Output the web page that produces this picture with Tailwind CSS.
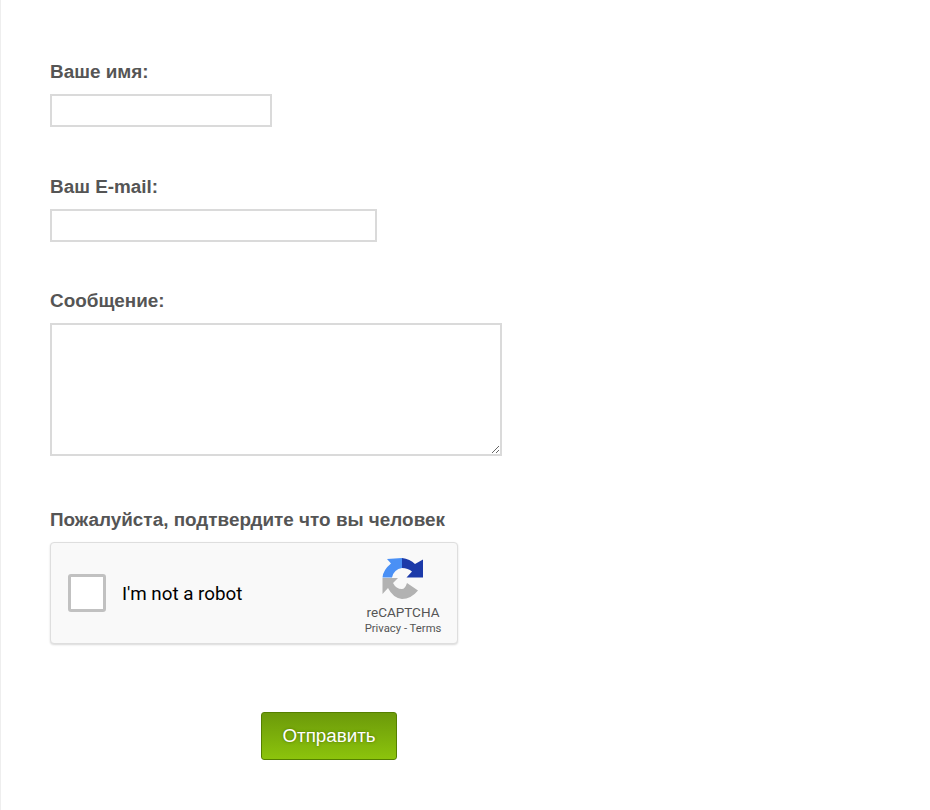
<!DOCTYPE html>
<html lang="ru">
<head>
  <meta charset="UTF-8">
  <title>Форма</title>
  <script src="https://cdn.jsdelivr.net/npm/@tailwindcss/browser@4"></script>
</head>
<body class="bg-white h-[810px] overflow-hidden font-['Liberation_Sans',sans-serif]">
  <form class="h-full border-l border-[#eeeeee] pl-[49px] pt-[60px] flex flex-col items-start">
    <label class="block h-[34px] leading-[24px] text-[18.9px] font-bold text-[#555555]">Ваше имя:</label>
    <input type="text" class="block w-[222px] h-[33px] bg-white border-2 border-[#dadada] outline-none">

    <label class="block mt-[48px] h-[34px] leading-[24px] text-[18.9px] font-bold text-[#555555]">Ваш E-mail:</label>
    <input type="text" class="block w-[327px] h-[33px] bg-white border-2 border-[#dadada] outline-none">

    <label class="block mt-[47px] h-[34px] leading-[24px] text-[18.9px] font-bold text-[#555555]">Сообщение:</label>
    <textarea class="block w-[452px] h-[133px] bg-white border-2 border-[#dadada] outline-none"></textarea>

    <label class="block mt-[52px] h-[34px] leading-[24px] text-[18.9px] font-bold text-[#555555]">Пожалуйста, подтвердите что вы человек</label>

    <!-- recaptcha -->
    <div class="w-[408px] h-[102px] flex items-center bg-[#f9f9f9] border border-[#dedede] rounded-[4px] shadow-[0_1px_2px_rgba(0,0,0,0.15)]">
      <div class="ml-[17px] w-[38px] h-[38px] bg-white border-[3px] border-[#c1c1c1] rounded-[3px]"></div>
      <span class="ml-[16px] mt-[2px] text-[18.8px] text-black font-['Roboto',sans-serif]">I'm not a robot</span>
      <div class="ml-auto mr-[16px] mt-[6px] w-[76px] flex flex-col items-center font-['Roboto',sans-serif]">
        <svg class="w-[42px] h-[42px] mb-[5px]" viewBox="0 0 42 42">
          <path fill="#4a90f5" d="M5 1 L20 0 V10 Q12 11 10 19.5 H0.5 Q1 12 9 5.5 Z"/>
          <path fill="#1c3aa9" d="M20 0 Q28 1 33 6 L41 1.5 V19.5 H24.5 L30 13.5 Q26 10 20 10 Z"/>
          <path fill="#b2b2b2" d="M0.5 20 H16 L11 25 Q14 31 20 31 Q23 31 25 25 L36 32.5 Q29 41 20 41 Q11 40 6 30 L0.5 36 Z"/>
        </svg>
        <span class="text-[13.5px] leading-[15px] text-[#555555] whitespace-nowrap">reCAPTCHA</span>
        <span class="mt-[2px] text-[11.3px] leading-[13px] text-[#555555] whitespace-nowrap">Privacy - Terms</span>
      </div>
    </div>

    <button type="button" class="mt-[68px] ml-[211px] w-[136px] h-[48px] text-[18.8px] text-white rounded-[3px] border border-[#558000] bg-gradient-to-b from-[#6c9a0a] to-[#8cc40c] [text-shadow:0_0_3px_#4c7000]">Отправить</button>
  </form>
</body>
</html>
